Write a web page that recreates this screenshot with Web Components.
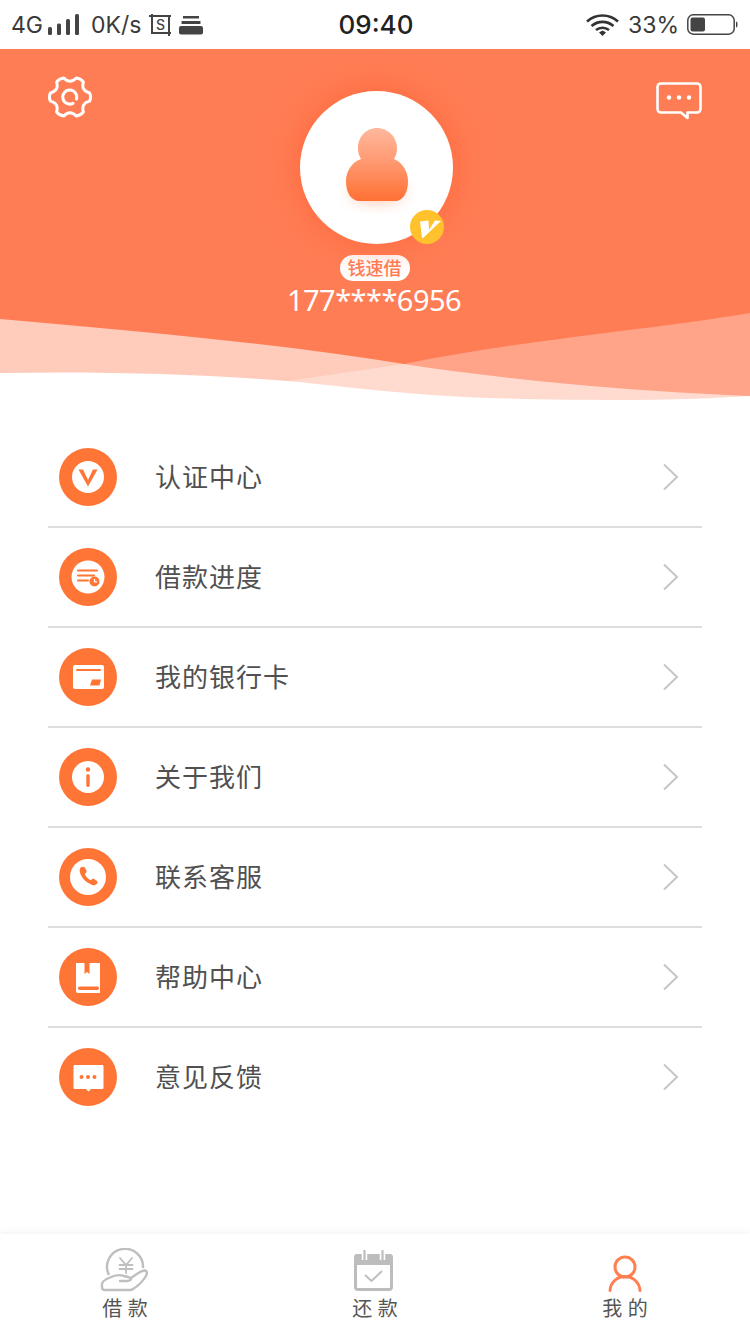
<!DOCTYPE html>
<html>
<head>
<meta charset="utf-8">
<title>我的</title>
<style>
  html, body { margin: 0; padding: 0; background: #fff; }
  body { font-family: "Noto Sans CJK SC", "Noto Sans", sans-serif; width: 750px; height: 1334px; overflow: hidden; display: flex; flex-direction: column; }
  menu-list { flex: 1; }
</style>
</head>
<body>
<status-bar></status-bar>
<profile-header name="钱速借" phone="177****6956"></profile-header>
<menu-list>
  <menu-row label="认证中心"><svg slot="icon" viewBox="0 0 58 58"><circle cx="29" cy="29" r="29" fill="#ff7535"/><circle cx="29" cy="29" r="16" fill="#fff"/><path d="M19.500 21.500h4.500l5 10.500 5-10.500h4.500l-9.500 17z" fill="#ff7535"/></svg></menu-row>
  <menu-row label="借款进度"><svg slot="icon" viewBox="0 0 58 58"><circle cx="29" cy="29" r="29" fill="#ff7535"/><circle cx="29" cy="29" r="16.500" fill="#fff"/><path d="M19 22.500h19M19 27.500h16M19 32.500h10" stroke="#ff7535" stroke-width="2" stroke-linecap="round" fill="none"/><circle cx="35.500" cy="33.500" r="5" fill="#ff7535"/><path d="M35.500 31v2.800h2.500" stroke="#fff" stroke-width="1.300" fill="none"/></svg></menu-row>
  <menu-row label="我的银行卡"><svg slot="icon" viewBox="0 0 58 58"><circle cx="29" cy="29" r="29" fill="#ff7535"/><rect x="14" y="17" width="31" height="24" rx="2" fill="#fff"/><path d="M18 22h23" stroke="#ff7535" stroke-width="2" stroke-linecap="round"/><path d="M33 31.500h9l-1.500 6h-9.500z" fill="#ff7535"/></svg></menu-row>
  <menu-row label="关于我们"><svg slot="icon" viewBox="0 0 58 58"><circle cx="29" cy="29" r="29" fill="#ff7535"/><circle cx="29" cy="29" r="16" fill="#fff"/><circle cx="29" cy="21.500" r="2.200" fill="#ff7535"/><rect x="27.300" y="26" width="3.400" height="13" rx="1.700" fill="#ff7535"/></svg></menu-row>
  <menu-row label="联系客服"><svg slot="icon" viewBox="0 0 58 58"><circle cx="29" cy="29" r="29" fill="#ff7535"/><circle cx="29" cy="29" r="18" fill="#fff"/><path d="M22.500 19.500c1.500-1 3-.8 3.600.4l1.300 2.900c.4.900.1 1.700-.6 2.300l-1 .9c1 2.600 3 4.800 5.800 6.200l1.200-1c.7-.6 1.600-.7 2.400-.2l2.500 1.700c1 .7 1.100 2 .2 3-1.300 1.400-3 1.800-4.700 1.200-6.800-2.300-11.800-8-12.500-13.800-.2-1.800.5-3.500 1.800-4.600z" fill="#ff7535"/></svg></menu-row>
  <menu-row label="帮助中心"><svg slot="icon" viewBox="0 0 58 58"><circle cx="29" cy="29" r="29" fill="#ff7535"/><path d="M17 15h24v30H19c-1.200 0-2-.8-2-2z" fill="#fff"/><path d="M25.500 15h5v11l-2.500-2-2.500 2z" fill="#ff7535"/><rect x="19" y="38.500" width="21" height="3.500" rx="1.700" fill="#ff7535"/></svg></menu-row>
  <menu-row label="意见反馈" last><svg slot="icon" viewBox="0 0 58 58"><circle cx="29" cy="29" r="29" fill="#ff7535"/><path d="M16 17h27c1 0 1.500.5 1.500 1.500v21c0 1-.5 1.500-1.500 1.500H32l-2.500 2.500L27 41H16c-1 0-1.500-.5-1.500-1.500v-21c0-1 .5-1.500 1.500-1.500z" fill="#fff"/><circle cx="22.500" cy="29" r="2" fill="#ff7535"/><circle cx="29" cy="29" r="2" fill="#ff7535"/><circle cx="35.500" cy="29" r="2" fill="#ff7535"/></svg></menu-row>
</menu-list>
<tab-bar>
  <tab-item label="借 款"><svg slot="icon" width="50" height="46" viewBox="0 0 50 46" fill="none" stroke="#bfbfbf" stroke-width="2.400"><path d="M9 27A18 18 0 1 1 43 20"/><path d="M20 33H26C29 33 31.500 32 31 30.500C30 29 27 29 24 28C20 26.500 15 27 10 29.500C4 32 2 34 2 36V39.500C2 41 3 42 5 42H30C31 42 32 41.800 33 41C38 38 43 33 46 28C47.500 25 47 22 44 22.500C40 23.500 35 27 31 30" stroke-linejoin="round" stroke-linecap="round"/><path d="M20 10l6 7 6-7M19.500 17h13M19.500 21h13M26 17v8" stroke-width="1.800" stroke-linecap="round"/></svg></tab-item>
  <tab-item label="还 款"><svg slot="icon" style="margin:0 3px 3px 0" width="39" height="41" viewBox="0 0 39 41" fill="none"><path d="M3 4h33c1.500 0 3 1.500 3 3v8H0V7c0-1.500 1.500-3 3-3z" fill="#bdbdbd"/><rect x="1.500" y="5.500" width="36" height="34" rx="2.500" stroke="#bdbdbd" stroke-width="3"/><path d="M10.500 1v9M28.500 1v9" stroke="#fff" stroke-width="5.500"/><path d="M10.500 1v8.500M28.500 1v8.500" stroke="#bdbdbd" stroke-width="2.200" stroke-linecap="round"/><path d="M11 25l6.500 6L28 21" stroke="#bdbdbd" stroke-width="1.800"/></svg></tab-item>
  <tab-item label="我 的" active><svg slot="icon" style="margin-bottom:2px" width="34" height="37" viewBox="0 0 34 37" fill="none" stroke="#ff7f50" stroke-width="3" stroke-linecap="round"><circle cx="17" cy="12" r="10"/><path d="M2 35.500C2.500 27.500 9 21.500 17 21.500S31.500 27.500 32 35.500"/></svg></tab-item>
</tab-bar>
<script>
class StatusBar extends HTMLElement {
  connectedCallback() {
    this.attachShadow({ mode: 'open' });
    this.shadowRoot.innerHTML = `
      <style>
        :host { display: grid; grid-template-columns: 1fr auto 1fr; align-items: center; height: 49px; color: #3a3a3a; font-family: "Inter", "Liberation Sans", sans-serif; font-size: 23px; padding: 0 12px; box-sizing: border-box; background: #fff; }
        .left, .right { display: flex; align-items: center; }
        .right { justify-content: flex-end; }
        .time { font-size: 26px; font-weight: 500; color: #222; margin-left: 2px; }
        .net { font-size: 23px; margin: 0 5px 0 -1px; }
        svg { display: block; }
      </style>
      <div class="left">
        <span class="net">4G</span>
        <svg width="32" height="22" viewBox="0 0 32 22" fill="#444"><rect x="0" y="13" width="4" height="8" rx="1.500"/><rect x="9" y="9.500" width="4" height="11.500" rx="1.500"/><rect x="18" y="5" width="4" height="16" rx="1.500"/><rect x="27" y="0" width="4" height="21" rx="1.500"/></svg>
        <span style="margin-left:11px">0K/s</span>
        <svg style="margin-left:8px" width="23" height="22" viewBox="0 0 23 22"><path d="M0 2h22M3 0v19h19M20 2v20" fill="none" stroke="#444" stroke-width="2"/><text x="11.500" y="16" text-anchor="middle" font-family="Inter, sans-serif" font-size="14" font-weight="500" fill="#444">S</text></svg>
        <svg style="margin-left:7px" width="24" height="20" viewBox="0 0 24 20" fill="#444"><rect x="4" y="1" width="16" height="2.500"/><rect x="2.500" y="6" width="19" height="3" rx=".5"/><rect x="0" y="11" width="24" height="8.500" rx="2"/></svg>
      </div>
      <div class="time">09:40</div>
      <div class="right">
        <svg width="33" height="22" viewBox="0 0 33 22" fill="none" stroke="#333" stroke-width="2.600"><path d="M1 7.500c9-8 22-8 31 0M5.500 12c6.500-5.500 15.500-5.500 22 0M10 16c3.800-3 9.200-3 13 0"/><path d="M13 18.500l3.500-2 3.500 2-3.500 3.500z" fill="#333" stroke="none"/></svg>
        <span style="margin-left:9px">33%</span>
        <svg style="margin-left:8px" width="51" height="21" viewBox="0 0 51 21" fill="none"><rect x=".8" y=".8" width="46.400" height="19.400" rx="5.500" stroke="#444" stroke-width="1.500"/><rect x="3.500" y="3.500" width="14.500" height="14" rx="2" fill="#444"/><path d="M49 7.500c1.200 0 1.500 1 1.500 3s-.3 3-1.500 3z" fill="#444"/></svg>
      </div>
    `;
  }
}
customElements.define('status-bar', StatusBar);

class ProfileHeader extends HTMLElement {
  gearPath() {
    // six flat lobes, the valleys rounded with a quadratic curve
    const pt = (deg, r) => {
      const a = deg * Math.PI / 180;
      return (r * Math.cos(a)).toFixed(2) + ' ' + (r * Math.sin(a)).toFixed(2);
    };
    let d = 'M' + pt(-12, 20);
    for (let i = 0; i < 6; i++) {
      const a = i * 60;
      d += ' Q' + pt(a, 21.5) + ' ' + pt(a + 12, 20);
      d += ' Q' + pt(a + 30, 12.5) + ' ' + pt(a + 48, 20);
    }
    return d + 'Z';
  }
  connectedCallback() {
    this.attachShadow({ mode: 'open' });
    this.shadowRoot.innerHTML = `
      <style>
        :host { display: grid; grid-template-columns: 252px 153px 1fr; position: relative; height: 351px; padding: 0 48px; box-sizing: border-box; }
        .wave { position: absolute; left: 0; top: 0; width: 750px; height: 351px; z-index: 0; }
        .col { position: relative; z-index: 1; }
        .gear { display: block; margin-top: 26px; }
        .chat { display: block; margin: 33px 0 0 auto; }
        .center { margin-top: 42px; display: flex; flex-direction: column; align-items: center; }
        .avatar { position: relative; width: 153px; height: 153px; border-radius: 50%; background: #fff; box-shadow: 0 0 34px rgba(255, 92, 45, .65); }
        .avatar svg.person { position: absolute; left: 38px; top: 29px; }
        .badge { position: absolute; right: 9px; bottom: 0; width: 34px; height: 34px; }
        .pill { margin: 11px 4px 0 0; background: #fff; color: #ff7d55; font-size: 18px; font-weight: 500; line-height: 24px; height: 26px; padding: 0 8px; border-radius: 13px; white-space: nowrap; }
        .phone { color: #fff; font-family: "Noto Sans", sans-serif; font-size: 29px; letter-spacing: -.55px; line-height: 38px; white-space: nowrap; margin-right: 5px; }
      </style>
      <svg class="wave" viewBox="0 49 750 351">
        <rect x="0" y="49" width="750" height="351" fill="#ff7d55"/>
        <path d="M200 394L404 364C520 340 650 330 750 313V400H200Z" fill="#fff" fill-opacity=".3"/>
        <path d="M0 319C150 332 280 344 404 364C520 382 650 392 750 396V400H0Z" fill="#fff" fill-opacity=".6"/>
        <path d="M0 373C100 371 200 374 287 381C330 385 370 390 407 393C470 399 560 400 620 400C670 400 720 398 750 396V400H0Z" fill="#fff"/>
      </svg>
      <div class="col">
        <svg class="gear" width="44" height="44" viewBox="-22 -22 44 44" fill="none" stroke="#fff" stroke-width="3" stroke-linejoin="round" stroke-linecap="round"><path d="${this.gearPath()}"/><path d="M6.500 2A7 7 0 1 0 3 6.300"/></svg>
      </div>
      <div class="col center">
        <div class="avatar">
          <svg class="person" width="78" height="100" viewBox="0 0 78 100">
            <defs>
              <linearGradient id="pg" x1="0" y1="0" x2="0" y2="1"><stop offset="0" stop-color="#ffb89d"/><stop offset=".45" stop-color="#ff9a72"/><stop offset="1" stop-color="#ff7033"/></linearGradient>
              <filter id="ps" x="-30%" y="-30%" width="160%" height="170%"><feGaussianBlur stdDeviation="7"/></filter>
            </defs>
            <ellipse cx="39" cy="72" rx="28" ry="12" fill="#ff8a5c" opacity=".4" filter="url(#ps)"/>
            <path d="M39 8c11 0 20 9 20 20 0 4-1 8-3 11 8 3 14 12 14 22 0 12-5 20-13 20H22C13 81 8 73 8 61c0-10 6-19 15-22-2-3-3-7-3-11C20 17 28 8 39 8z" fill="url(#pg)"/>
          </svg>
          <svg class="badge" viewBox="0 0 34 34"><circle cx="17" cy="17" r="17" fill="#ffc12c"/><path d="M10 11.500L18.500 10.500L19 20L25 10.500L31 11L13 28L12 28z" fill="#fff"/></svg>
        </div>
        <div class="pill">${this.getAttribute('name')}</div>
        <div class="phone">${this.getAttribute('phone')}</div>
      </div>
      <div class="col">
        <svg class="chat" width="46" height="38" viewBox="0 0 46 38" fill="none"><path d="M5 1.500h36c2 0 3.500 1.500 3.500 3.500v22c0 2-1.500 3.500-3.500 3.500h-9.500V36l-6.500-5.500H5c-2 0-3.500-1.500-3.500-3.500V5c0-2 1.500-3.500 3.500-3.500z" stroke="#fff" stroke-width="2.600" stroke-linejoin="round"/><circle cx="13" cy="15.500" r="2.200" fill="#fff"/><circle cx="23" cy="15.500" r="2.200" fill="#fff"/><circle cx="33" cy="15.500" r="2.200" fill="#fff"/></svg>
      </div>
    `;
  }
}
customElements.define('profile-header', ProfileHeader);

class MenuList extends HTMLElement {
  connectedCallback() {
    this.attachShadow({ mode: 'open' });
    this.shadowRoot.innerHTML = `
      <style>
        :host { display: block; padding: 28px 48px 0; }
      </style>
      <slot></slot>
    `;
  }
}
customElements.define('menu-list', MenuList);

class MenuRow extends HTMLElement {
  connectedCallback() {
    this.attachShadow({ mode: 'open' });
    this.shadowRoot.innerHTML = `
      <style>
        :host { display: flex; align-items: center; height: 100px; box-sizing: border-box; border-bottom: 2px solid #dedede; padding: 0 23px 0 11px; color: #505050; font-size: 26px; letter-spacing: 1px; }
        :host([last]) { border-bottom-color: transparent; }
        ::slotted(svg) { width: 58px; height: 58px; display: block; flex: none; }
        .label { flex: 1; margin: 0 0 4px 38px; white-space: nowrap; }
      </style>
      <slot name="icon"></slot>
      <span class="label">${this.getAttribute('label')}</span>
      <svg width="17" height="28" viewBox="0 0 17 28" fill="none" stroke="#c6c6c6" stroke-width="2"><path d="M2 1.500L15 14 2 26.500"/></svg>
    `;
  }
}
customElements.define('menu-row', MenuRow);

class TabBar extends HTMLElement {
  connectedCallback() {
    this.attachShadow({ mode: 'open' });
    this.shadowRoot.innerHTML = `
      <style>
        :host { display: grid; grid-template-columns: repeat(3, 250px); height: 100px; background: #fff; box-shadow: 0 -2px 7px rgba(0, 0, 0, .05); position: relative; }
      </style>
      <slot></slot>
    `;
  }
}
customElements.define('tab-bar', TabBar);

class TabItem extends HTMLElement {
  connectedCallback() {
    this.attachShadow({ mode: 'open' });
    this.shadowRoot.innerHTML = `
      <style>
        :host { display: flex; flex-direction: column; align-items: center; color: #555; font-size: 20px; }
        .icon { height: 60px; display: flex; align-items: flex-end; }
        ::slotted(svg) { display: block; }
        .label { line-height: 28px; white-space: pre; word-spacing: 1px; }
      </style>
      <div class="icon"><slot name="icon"></slot></div>
      <div class="label">${this.getAttribute('label')}</div>
    `;
  }
}
customElements.define('tab-item', TabItem);
</script>
</body>
</html>
